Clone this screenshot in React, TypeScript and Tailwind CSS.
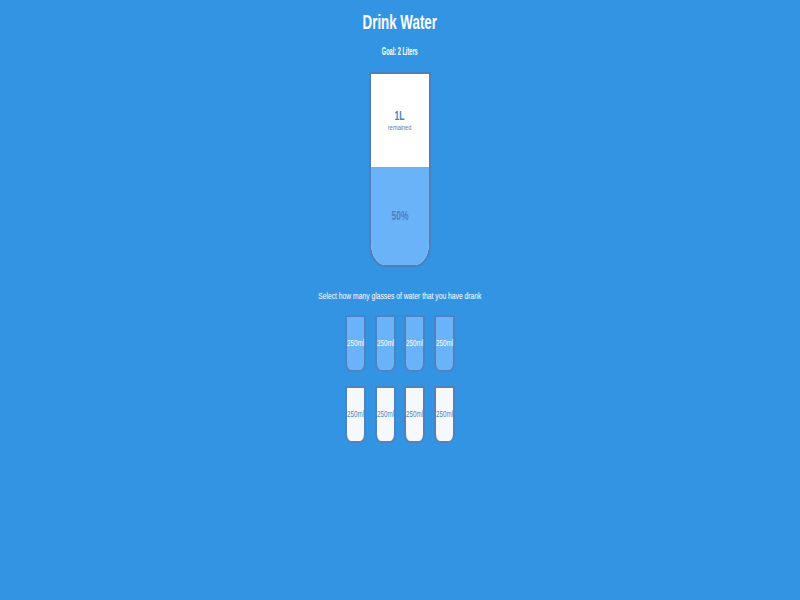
import React from "react";

const font = "'Liberation Sans', Arial, sans-serif";

function SmallCup({ full }: { full: boolean }) {
  return (
    <div
      className={
        "flex h-[57px] w-[21px] items-center justify-center overflow-visible rounded-bl-[6px_9px] rounded-br-[6px_9px] border-2 border-[#4f83c0] text-[8.5px] leading-none " +
        (full ? "bg-[#6ab3f8] text-white" : "bg-[#f5f9fd] text-[#4f83c0]")
      }
    >
      <span className="inline-block shrink-0 scale-x-[0.74] whitespace-nowrap">250ml</span>
    </div>
  );
}

export default function App() {
  return (
    <div
      className="flex min-h-[600px] w-full flex-col items-center bg-[#3494e4] text-white"
      style={{ fontFamily: font }}
    >
      <h1 className="mt-[10px] scale-x-[0.667] whitespace-nowrap text-[20px] font-bold leading-[24px]">Drink Water</h1>
      <h3 className="mt-[10px] scale-x-[0.49] whitespace-nowrap text-[11.5px] font-bold leading-[14px]">Goal: 2 Liters</h3>
      <div className="mt-[14px] flex h-[195px] w-[62px] flex-col overflow-hidden rounded-bl-[16px_24px] rounded-br-[16px_24px] border-2 border-[#4c7fbc] bg-white text-[#4c7fbc]">
        <div className="flex flex-1 flex-col items-center justify-center">
          <span className="scale-x-[0.66] whitespace-nowrap text-[13px] font-bold leading-[14px]">1L</span>
          <small className="scale-x-[0.7] whitespace-nowrap text-[8px] leading-[10px]">remained</small>
        </div>
        <div className="flex h-[98px] items-center justify-center bg-[#6ab3f8] text-[#4d80bd]">
          <span className="scale-x-[0.7] whitespace-nowrap text-[12px] font-bold">50%</span>
        </div>
      </div>
      <p className="mt-[23px] scale-x-[0.75] whitespace-nowrap text-[9px] leading-[12px]">Select how many glasses of water that you have drank</p>
      <div className="mt-[13px] grid grid-cols-4 gap-x-[8.5px] gap-y-[14px]">
        {[0, 1, 2, 3, 4, 5, 6, 7].map((i) => (
          <SmallCup key={i} full={i < 4} />
        ))}
      </div>
    </div>
  );
}
